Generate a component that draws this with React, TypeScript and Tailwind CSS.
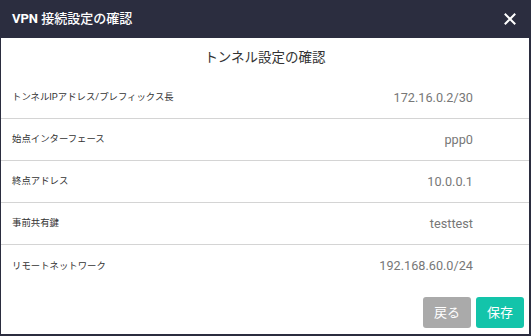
import React from "react";

const rows = [
  { label: "トンネルIPアドレス/プレフィックス長", value: "172.16.0.2/30" },
  { label: "始点インターフェース", value: "ppp0" },
  { label: "終点アドレス", value: "10.0.0.1" },
  { label: "事前共有鍵", value: "testtest" },
  { label: "リモートネットワーク", value: "192.168.60.0/24" },
];

const font = { fontFamily: 'Roboto, "Noto Sans CJK JP", sans-serif' };

export default function App() {
  return (
    <div
      className="w-[531px] h-[336px] flex flex-col bg-white border-l border-r-2 border-b-2 border-[#2b2d3f]"
      style={font}
    >
      {/* header */}
      <div className="h-[38px] shrink-0 bg-[#2b2d3f] flex items-center justify-between pl-[11px] pr-[11px]">
        <span className="text-white text-[13px] font-medium">
          <span className="font-bold">VPN</span> 接続設定の確認
        </span>
        <svg width="12" height="12" viewBox="0 0 12 12" className="mr-[2px]">
          <path d="M1.5 1.5 L10.5 10.5 M10.5 1.5 L1.5 10.5" stroke="#fff" strokeWidth="2" strokeLinecap="square" />
        </svg>
      </div>

      {/* subtitle */}
      <div className="h-[39px] shrink-0 flex items-center justify-center text-[13.5px] text-[#333] pb-[1px]">
        トンネル設定の確認
      </div>

      {/* rows */}
      <div className="flex flex-col divide-y divide-[#d4d4d4]">
        {rows.map((r) => (
          <div key={r.label} className="h-[42px] flex items-center justify-between pl-[11px] pr-[56px]">
            <span className="text-[9.4px] text-[#333]">{r.label}</span>
            <span className="text-[12.7px] text-[#777]">{r.value}</span>
          </div>
        ))}
      </div>

      {/* footer */}
      <div className="flex-1 flex items-end justify-end gap-[5px] pr-[5px] pb-[6px]">
        <button className="w-[48px] h-[31px] rounded-[3px] bg-[#aaaaaa] text-white text-[13px]">戻る</button>
        <button className="w-[48px] h-[31px] rounded-[3px] bg-[#13c4aa] text-white text-[13px]">保存</button>
      </div>
    </div>
  );
}
